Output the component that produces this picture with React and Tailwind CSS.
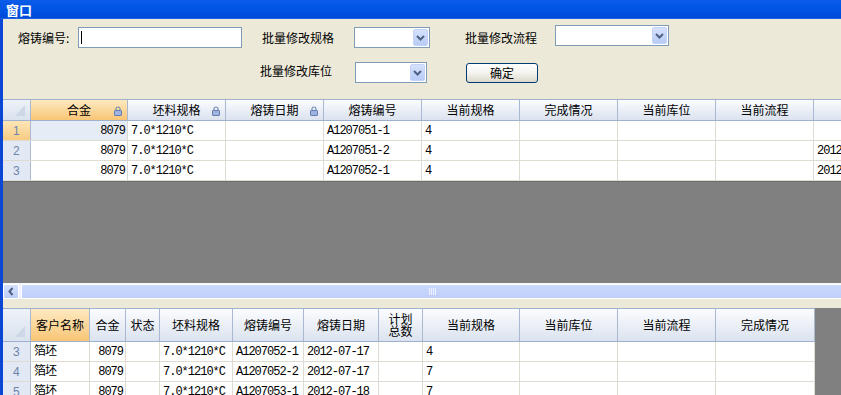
import React from "react";

const CJK = "font-['Noto_Sans_CJK_SC',sans-serif]";
const MONO = "font-['Liberation_Mono','Noto_Sans_CJK_SC',monospace] tracking-[-1px]";

function Lock() {
  return (
    <svg width="8" height="10" viewBox="0 0 8 10" className="shrink-0">
      <path d="M2 4.5V3a2 2 0 0 1 4 0v1.5" fill="none" stroke="#7088b4" strokeWidth="1.1" />
      <rect x="0.5" y="4.5" width="7" height="5" rx="0.6" fill="#9fb4de" stroke="#5f7cb2" />
    </svg>
  );
}

function Corner({ h }) {
  return (
    <div className={`w-[28px] shrink-0 border-r border-[#a9b9d1] bg-linear-to-b from-[#eef2f8] to-[#d9e2ee] flex items-end justify-end pr-[4px] pb-[3px]`} style={{ height: h }}>
      <svg width="12" height="13" viewBox="0 0 12 13">
        <polygon points="1,12 11,12 11,1" fill="#cdd7e6" />
      </svg>
    </div>
  );
}

function Chevron() {
  return (
    <div className="w-[15px] h-[17px] mr-[1px] rounded-[2px] bg-linear-to-b from-[#d6e2fc] to-[#b8cbf6] border border-[#c3d3f7] flex items-center justify-center">
      <svg width="9" height="6" viewBox="0 0 9 6">
        <path d="M1 1l3.5 3.5L8 1" fill="none" stroke="#4d6185" strokeWidth="2" />
      </svg>
    </div>
  );
}

function Select({ w, extra = "" }) {
  return (
    <div className={`h-[21px] bg-white border border-[#7f9db9] flex items-center justify-end shrink-0 ${extra}`} style={{ width: w }}>
      <Chevron />
    </div>
  );
}

function Label({ children, w, extra = "" }) {
  return (
    <div className={`${CJK} text-[12px] leading-[14px] text-black shrink-0 ${extra}`} style={{ width: w }}>
      {children}
    </div>
  );
}

const g1Cols = [
  { t: "合金", w: 97, lock: true, sel: true, align: "right" },
  { t: "坯料规格", w: 98, lock: true },
  { t: "熔铸日期", w: 98, lock: true },
  { t: "熔铸编号", w: 98 },
  { t: "当前规格", w: 98 },
  { t: "完成情况", w: 98 },
  { t: "当前库位", w: 98 },
  { t: "当前流程", w: 98 },
  { t: "", w: 60 },
];

const g1Rows = [
  ["8079", "7.0*1210*C", "", "A1207051-1", "4", "", "", "", ""],
  ["8079", "7.0*1210*C", "", "A1207051-2", "4", "", "", "", "2012-07-17"],
  ["8079", "7.0*1210*C", "", "A1207052-1", "4", "", "", "", "2012-07-17"],
];

const g2Cols = [
  { t: "客户名称", w: 59, sel: true },
  { t: "合金", w: 36, align: "right" },
  { t: "状态", w: 34 },
  { t: "坯料规格", w: 73 },
  { t: "熔铸编号", w: 71 },
  { t: "熔铸日期", w: 75 },
  { t: "计划\n总数", w: 44 },
  { t: "当前规格", w: 97 },
  { t: "当前库位", w: 98 },
  { t: "当前流程", w: 98 },
  { t: "完成情况", w: 99 },
];

const g2Rows = [
  ["3", ["箔坯", "8079", "", "7.0*1210*C", "A1207052-1", "2012-07-17", "", "4", "", "", ""]],
  ["4", ["箔坯", "8079", "", "7.0*1210*C", "A1207052-2", "2012-07-17", "", "7", "", "", ""]],
  ["5", ["箔坯", "8079", "", "7.0*1210*C", "A1207053-1", "2012-07-18", "", "7", "", "", ""]],
];

function HeaderCell({ c, h }) {
  const bg = c.sel
    ? "bg-linear-to-b from-[#fde9c0] to-[#f8c574]"
    : "bg-linear-to-b from-[#fbfcfe] to-[#dbe3ef]";
  return (
    <div
      className={`shrink-0 border-r border-[#a9b9d1] ${bg} flex items-center justify-center relative`}
      style={{ width: c.w, height: h }}
    >
      <span className={`${CJK} text-[12px] leading-[12px] text-black text-center whitespace-pre`}>{c.t}</span>
      {c.lock && (
        <span className="absolute right-[5px] top-[6px]">
          <Lock />
        </span>
      )}
    </div>
  );
}

function DataCell({ v, w, align, selected }) {
  return (
    <div
      className={`shrink-0 h-full border-r border-[#dedcd2] flex items-center overflow-hidden whitespace-nowrap ${
        align === "right" ? "justify-end pr-[2px]" : "pl-[3px]"
      } ${selected ? "bg-[#e6ecf6]" : "bg-white"}`}
      style={{ width: w }}
    >
      <span className={`${MONO} text-[12px] leading-[14px] text-black`}>{v}</span>
    </div>
  );
}

function RowHead({ n, sel }) {
  return (
    <div
      className={`w-[28px] shrink-0 h-full border-r border-[#a9b9d1] flex items-center pl-[10px] ${
        sel ? "bg-linear-to-b from-[#fde6b8] to-[#f7cb82]" : "bg-[#e2e9f4]"
      }`}
    >
      <span className="font-['Liberation_Sans',sans-serif] text-[12px] leading-[14px] text-[#6c84ab]">{n}</span>
    </div>
  );
}

export default function App() {
  return (
    <div className="w-[841px] h-[395px] overflow-hidden flex flex-col bg-[#ece9d8]">
      {/* title bar */}
      <div className="h-[19px] shrink-0 bg-linear-to-b from-[#0a5ce9] via-[#0055e5] to-[#0049d8] border-b border-[#1c62e6] flex items-center pl-[6px]">
        <span className={`${CJK} text-[13px] leading-[15px] font-bold text-white`}>窗口</span>
      </div>
      <div className="flex-1 flex min-h-0">
        <div className="w-[3px] shrink-0 bg-[#0b47d4]" />
        <div className="flex-1 flex flex-col min-w-0">
          {/* form */}
          <div className="h-[80px] shrink-0 flex flex-col pt-[8px]">
            <div className="h-[21px] flex items-center">
              <Label w={60} extra="ml-[15px]">熔铸编号:</Label>
              <div className="w-[164px] h-[21px] bg-white border border-[#7f9db9] flex items-center pl-[2px] shrink-0">
                <div className="w-px h-[13px] bg-black" />
              </div>
              <Label w={92} extra="ml-[20px]">批量修改规格</Label>
              <Select w={76} />
              <Label w={90} extra="ml-[35px]">批量修改流程</Label>
              <Select w={114} extra="-mt-[4px]" />
            </div>
            <div className="h-[21px] mt-[14px] flex items-center">
              <Label w={95} extra="ml-[257px] -mt-[4px]">批量修改库位</Label>
              <Select w={72} />
              <div className="ml-[39px] w-[72px] h-[20px] rounded-[3px] border border-[#003c74] bg-linear-to-b from-[#ffffff] via-[#f4f3ee] to-[#dcd8cb] flex items-center justify-center shrink-0">
                <span className={`${CJK} text-[12px] leading-[14px] text-black`}>确定</span>
              </div>
            </div>
          </div>

          {/* grid 1 */}
          <div className="flex-1 flex flex-col bg-[#808080] min-h-0">
            <div className="h-[22px] shrink-0 flex border-t border-b border-[#9fb1cc]">
              <Corner h={20} />
              {g1Cols.map((c, i) => (
                <HeaderCell key={i} c={c} h={20} />
              ))}
            </div>
            {g1Rows.map((r, ri) => (
              <div key={ri} className="h-[20px] shrink-0 flex border-b border-[#dedcd2]">
                <RowHead n={ri + 1} sel={ri === 0} />
                {r.map((v, ci) => (
                  <DataCell key={ci} v={v} w={g1Cols[ci].w} align={g1Cols[ci].align} selected={ri === 0 && ci === 0} />
                ))}
              </div>
            ))}
            <div className="h-px bg-[#6d6d6d] shrink-0" />
          </div>

          {/* scrollbar */}
          <div className="h-[16px] shrink-0 flex items-stretch bg-[#eef3fd] border-t border-[#f4f6fb]">
            <div className="w-[16px] shrink-0 rounded-[2px] bg-linear-to-b from-[#d5e1fc] to-[#bccdf6] border border-white flex items-center justify-center">
              <svg width="6" height="9" viewBox="0 0 6 9">
                <path d="M4.5 1L1.5 4.5 4.5 8" fill="none" stroke="#4d6185" strokeWidth="2" />
              </svg>
            </div>
            <div className="flex-1 ml-[2px] -mr-[4px] rounded-[2px] bg-linear-to-b from-[#cad9fc] to-[#bfcff9] border border-white flex items-center justify-center">
              <svg width="8" height="7" viewBox="0 0 8 7">
                <path d="M0.5 0v7M2.5 0v7M4.5 0v7M6.5 0v7" stroke="#eef3ff" strokeWidth="1" />
              </svg>
            </div>
          </div>
          <div className="h-[9px] shrink-0 bg-[#ece9d8]" />

          {/* grid 2 */}
          <div className="h-[87px] shrink-0 bg-[#808080] overflow-hidden">
            <div className="w-[812px] flex flex-col">
              <div className="h-[34px] shrink-0 flex border-t border-b border-[#9fb1cc]">
                <Corner h={32} />
                {g2Cols.map((c, i) => (
                  <HeaderCell key={i} c={c} h={32} />
                ))}
              </div>
              {g2Rows.map(([n, r], ri) => (
                <div key={ri} className="h-[20px] shrink-0 flex border-b border-[#dedcd2]">
                  <RowHead n={n} />
                  {r.map((v, ci) => (
                    <DataCell key={ci} v={v} w={g2Cols[ci].w} align={g2Cols[ci].align} />
                  ))}
                </div>
              ))}
            </div>
          </div>
        </div>
      </div>
    </div>
  );
}
